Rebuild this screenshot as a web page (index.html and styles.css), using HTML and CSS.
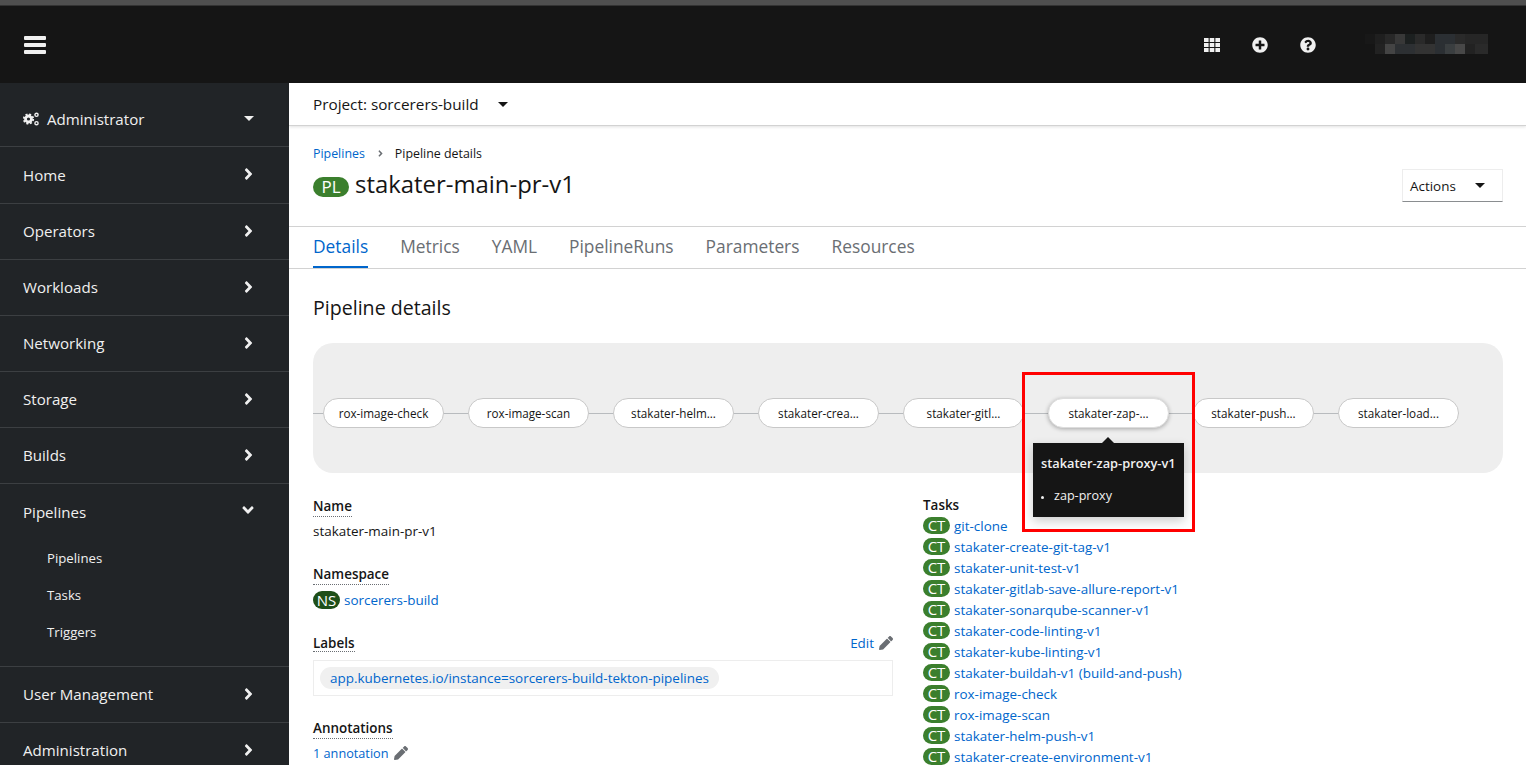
FILE: index.html
```html
<!DOCTYPE html>
<html lang="en">
<head>
    <meta charset="UTF-8">
    <meta name="viewport" content="width=device-width, initial-scale=1.0">
    <title>Pipeline details</title>
    <link rel="stylesheet" href="styles.css">
</head>
<body>
    <div class="top-strip"></div>
    <header class="masthead">
        <div class="burger"><span></span><span></span><span></span></div>
        <div class="masthead-tools">
            <svg class="tool-icon" viewBox="0 0 16 14"><path d="M0 0h4.6v4H0zM5.700 0h4.600v4H5.700zM11.400 0H16v4h-4.600zM0 5h4.600v4H0zM5.700 5h4.600v4H5.700zM11.400 5H16v4h-4.600zM0 10h4.600v4H0zM5.700 10h4.600v4H5.700zM11.400 10H16v4h-4.600z"/></svg>
            <svg class="tool-icon" viewBox="0 0 512 512"><path d="M256 8C119 8 8 119 8 256s111 248 248 248 248-111 248-248S393 8 256 8zm144 276c0 6.6-5.4 12-12 12h-92v92c0 6.6-5.4 12-12 12h-56c-6.600 0-12-5.400-12-12v-92h-92c-6.600 0-12-5.400-12-12v-56c0-6.600 5.400-12 12-12h92v-92c0-6.600 5.400-12 12-12h56c6.600 0 12 5.400 12 12v92h92c6.600 0 12 5.400 12 12v56z"/></svg>
            <svg class="tool-icon" viewBox="0 0 512 512"><path d="M504 256c0 136.997-111.043 248-248 248S8 392.997 8 256C8 119.083 119.043 8 256 8s248 111.083 248 248zM262.655 90c-54.497 0-89.255 22.957-116.549 63.758-3.536 5.286-2.353 12.415 2.715 16.258l34.699 26.31c5.205 3.947 12.621 3.008 16.665-2.122 17.864-22.658 30.113-35.797 57.303-35.797 20.429 0 45.698 13.148 45.698 32.958 0 14.976-12.363 22.667-32.534 33.976C247.128 238.528 216 254.941 216 296v4c0 6.627 5.373 12 12 12h56c6.627 0 12-5.373 12-12v-1.333c0-28.462 83.186-29.647 83.186-106.667 0-58.002-60.165-102-116.531-102zM256 338c-25.365 0-46 20.635-46 46 0 25.364 20.635 46 46 46s46-20.636 46-46c0-25.365-20.635-46-46-46z"/></svg>
            <div class="user-blur"><div class="blur-row-a"></div><div class="blur-row-b"></div></div>
        </div>
    </header>

    <div class="layout">
        <nav class="sidebar">
            <div class="nav-item nav-perspective">
                <span class="nav-label">
                    <svg class="cogs" viewBox="0 0 16 14">
                        <circle cx="5.500" cy="7" r="3" class="cog-ring"/>
                        <circle cx="5.500" cy="7" r="4.700" class="cog-teeth"/>
                        <circle cx="13.500" cy="2.800" r="1.600" class="cog-small"/>
                        <circle cx="13.500" cy="11.200" r="1.600" class="cog-small"/>
                    </svg>
                    Administrator
                </span>
                <span class="caret-down"></span>
            </div>
            <div class="nav-item"><span class="nav-label">Home</span><svg class="chev" viewBox="0 0 256 512"><path d="M224.300 273l-136 136c-9.400 9.400-24.600 9.400-33.900 0l-22.600-22.600c-9.400-9.400-9.400-24.600 0-33.900l96.400-96.400-96.400-96.400c-9.400-9.400-9.400-24.600 0-33.900L54.300 103c9.400-9.400 24.600-9.400 33.900 0l136 136c9.500 9.400 9.500 24.600.1 34z"/></svg></div>
            <div class="nav-item"><span class="nav-label">Operators</span><svg class="chev" viewBox="0 0 256 512"><path d="M224.300 273l-136 136c-9.400 9.400-24.600 9.400-33.900 0l-22.600-22.600c-9.400-9.400-9.400-24.600 0-33.900l96.400-96.400-96.400-96.400c-9.400-9.400-9.400-24.600 0-33.900L54.300 103c9.400-9.400 24.600-9.400 33.900 0l136 136c9.500 9.400 9.500 24.600.1 34z"/></svg></div>
            <div class="nav-item"><span class="nav-label">Workloads</span><svg class="chev" viewBox="0 0 256 512"><path d="M224.300 273l-136 136c-9.400 9.400-24.600 9.400-33.900 0l-22.600-22.600c-9.400-9.400-9.400-24.600 0-33.900l96.400-96.400-96.400-96.400c-9.400-9.400-9.400-24.600 0-33.900L54.300 103c9.400-9.400 24.600-9.400 33.900 0l136 136c9.500 9.400 9.500 24.600.1 34z"/></svg></div>
            <div class="nav-item"><span class="nav-label">Networking</span><svg class="chev" viewBox="0 0 256 512"><path d="M224.300 273l-136 136c-9.400 9.400-24.600 9.400-33.900 0l-22.600-22.600c-9.400-9.400-9.400-24.600 0-33.900l96.400-96.400-96.400-96.400c-9.400-9.400-9.400-24.600 0-33.900L54.300 103c9.400-9.400 24.600-9.400 33.900 0l136 136c9.500 9.400 9.500 24.600.1 34z"/></svg></div>
            <div class="nav-item"><span class="nav-label">Storage</span><svg class="chev" viewBox="0 0 256 512"><path d="M224.300 273l-136 136c-9.400 9.400-24.600 9.400-33.900 0l-22.600-22.600c-9.400-9.400-9.400-24.600 0-33.900l96.400-96.400-96.400-96.400c-9.400-9.400-9.400-24.600 0-33.900L54.300 103c9.400-9.400 24.600-9.400 33.900 0l136 136c9.500 9.400 9.500 24.600.1 34z"/></svg></div>
            <div class="nav-item"><span class="nav-label">Builds</span><svg class="chev" viewBox="0 0 256 512"><path d="M224.300 273l-136 136c-9.400 9.400-24.600 9.400-33.900 0l-22.600-22.600c-9.400-9.400-9.400-24.600 0-33.900l96.400-96.400-96.400-96.400c-9.400-9.400-9.400-24.600 0-33.900L54.300 103c9.400-9.400 24.600-9.400 33.900 0l136 136c9.500 9.400 9.500 24.600.1 34z"/></svg></div>
            <div class="nav-group">
                <div class="nav-item nav-open"><span class="nav-label">Pipelines</span><svg class="chev-down" viewBox="0 0 320 512"><path d="M143 352.300L7 216.300c-9.400-9.400-9.400-24.600 0-33.900l22.600-22.600c9.400-9.400 24.600-9.400 33.900 0l96.400 96.400 96.400-96.400c9.400-9.400 24.600-9.400 33.900 0l22.600 22.600c9.400 9.400 9.400 24.600 0 33.900l-136 136c-9.200 9.400-24.400 9.400-33.800 0z"/></svg></div>
                <a class="nav-sub">Pipelines</a>
                <a class="nav-sub">Tasks</a>
                <a class="nav-sub">Triggers</a>
            </div>
            <div class="nav-item"><span class="nav-label">User Management</span><svg class="chev" viewBox="0 0 256 512"><path d="M224.300 273l-136 136c-9.400 9.400-24.600 9.400-33.900 0l-22.600-22.600c-9.400-9.400-9.400-24.600 0-33.900l96.400-96.400-96.400-96.400c-9.400-9.400-9.400-24.600 0-33.900L54.300 103c9.400-9.400 24.600-9.400 33.900 0l136 136c9.500 9.400 9.500 24.600.1 34z"/></svg></div>
            <div class="nav-item"><span class="nav-label">Administration</span><svg class="chev" viewBox="0 0 256 512"><path d="M224.300 273l-136 136c-9.400 9.400-24.600 9.400-33.900 0l-22.600-22.600c-9.400-9.400-9.400-24.600 0-33.900l96.400-96.400-96.400-96.400c-9.400-9.400-9.400-24.600 0-33.900L54.300 103c9.400-9.400 24.600-9.400 33.900 0l136 136c9.500 9.400 9.500 24.600.1 34z"/></svg></div>
        </nav>

        <main class="content">
            <div class="project-bar">
                <span>Project: sorcerers-build</span>
                <span class="caret-dark"></span>
            </div>

            <div class="page-head">
                <div class="breadcrumb">
                    <a>Pipelines</a>
                    <svg class="crumb-sep" viewBox="0 0 256 512"><path d="M224.300 273l-136 136c-9.400 9.400-24.600 9.400-33.900 0l-22.600-22.600c-9.400-9.400-9.400-24.600 0-33.900l96.400-96.400-96.400-96.400c-9.400-9.400-9.400-24.600 0-33.900L54.300 103c9.400-9.400 24.600-9.400 33.900 0l136 136c9.500 9.400 9.500 24.600.1 34z"/></svg>
                    <span>Pipeline details</span>
                </div>
                <div class="title-row">
                    <h1><span class="badge badge-pl">PL</span>stakater-main-pr-v1</h1>
                    <button class="actions">Actions<span class="caret-dark"></span></button>
                </div>
            </div>

            <div class="tabs">
                <a class="tab tab-active">Details</a>
                <a class="tab">Metrics</a>
                <a class="tab">YAML</a>
                <a class="tab">PipelineRuns</a>
                <a class="tab">Parameters</a>
                <a class="tab">Resources</a>
            </div>

            <section class="details">
                <h2>Pipeline details</h2>

                <div class="graph">
                    <div class="graph-line">
                        <div class="node">rox-image-check</div>
                        <div class="node">rox-image-scan</div>
                        <div class="node">stakater-helm...</div>
                        <div class="node">stakater-crea...</div>
                        <div class="node">stakater-gitl...</div>
                        <div class="node node-hover">stakater-zap-...
                            <div class="tip">
                                <div class="tip-title">stakater-zap-proxy-v1</div>
                                <ul><li>zap-proxy</li></ul>
                            </div>
                            <div class="highlight"></div>
                        </div>
                        <div class="node">stakater-push...</div>
                        <div class="node">stakater-load...</div>
                    </div>
                </div>

                <div class="columns">
                    <div class="col-left">
                        <dl class="field field-name">
                            <dt><span>Name</span></dt>
                            <dd>stakater-main-pr-v1</dd>
                        </dl>
                        <dl class="field field-ns">
                            <dt><span>Namespace</span></dt>
                            <dd><span class="badge badge-ns">NS</span><a>sorcerers-build</a></dd>
                        </dl>
                        <dl class="field field-labels">
                            <dt class="dt-row"><span>Labels</span>
                                <a class="edit">Edit<svg class="pencil" viewBox="0 0 512 512"><path d="M497.900 142.100l-46.100 46.100c-4.700 4.700-12.300 4.700-17 0l-111-111c-4.700-4.700-4.700-12.300 0-17l46.100-46.100c18.700-18.700 49.100-18.700 67.900 0l60.100 60.100c18.800 18.700 18.800 49.100 0 67.900zM284.200 99.800L21.600 362.400.4 483.900c-2.900 16.400 11.400 30.600 27.800 27.800l121.500-21.300 262.600-262.600c4.700-4.700 4.700-12.300 0-17l-111-111c-4.800-4.700-12.400-4.700-17.100 0z"/></svg></a>
                            </dt>
                            <dd class="label-box"><a class="label-chip">app.kubernetes.io/instance=sorcerers-build-tekton-pipelines</a></dd>
                        </dl>
                        <dl class="field field-ann">
                            <dt><span>Annotations</span></dt>
                            <dd><a>1 annotation<svg class="pencil" viewBox="0 0 512 512"><path d="M497.900 142.100l-46.100 46.100c-4.700 4.700-12.300 4.700-17 0l-111-111c-4.700-4.700-4.700-12.300 0-17l46.100-46.100c18.700-18.700 49.100-18.700 67.900 0l60.100 60.100c18.800 18.700 18.800 49.100 0 67.900zM284.200 99.800L21.600 362.400.4 483.900c-2.900 16.400 11.400 30.600 27.800 27.800l121.500-21.300 262.600-262.600c4.700-4.700 4.700-12.300 0-17l-111-111c-4.800-4.700-12.400-4.700-17.100 0z"/></svg></a></dd>
                        </dl>
                    </div>
                    <div class="col-right">
                        <div class="tasks-title">Tasks</div>
                        <ul class="tasks">
                            <li><span class="badge badge-ct">CT</span><a>git-clone</a></li>
                            <li><span class="badge badge-ct">CT</span><a>stakater-create-git-tag-v1</a></li>
                            <li><span class="badge badge-ct">CT</span><a>stakater-unit-test-v1</a></li>
                            <li><span class="badge badge-ct">CT</span><a>stakater-gitlab-save-allure-report-v1</a></li>
                            <li><span class="badge badge-ct">CT</span><a>stakater-sonarqube-scanner-v1</a></li>
                            <li><span class="badge badge-ct">CT</span><a>stakater-code-linting-v1</a></li>
                            <li><span class="badge badge-ct">CT</span><a>stakater-kube-linting-v1</a></li>
                            <li><span class="badge badge-ct">CT</span><a>stakater-buildah-v1 (build-and-push)</a></li>
                            <li><span class="badge badge-ct">CT</span><a>rox-image-check</a></li>
                            <li><span class="badge badge-ct">CT</span><a>rox-image-scan</a></li>
                            <li><span class="badge badge-ct">CT</span><a>stakater-helm-push-v1</a></li>
                            <li><span class="badge badge-ct">CT</span><a>stakater-create-environment-v1</a></li>
                        </ul>
                    </div>
                </div>
            </section>
        </main>
    </div>
</body>
</html>
```

FILE: styles.css
```css
html, body {
    height: 100%;
}

body {
    margin: 0;
    height: 765px;
    overflow: hidden;
    font-family: "Open Sans", "Noto Sans", sans-serif;
    font-size: 13.45px;
    color: #151515;
    background: #fff;
}

a {
    color: #06c;
    text-decoration: none;
}

/* top of the page */
.top-strip {
    height: 6px;
    background: #4f4f4f;
    border-bottom: 1px solid #333;
    box-sizing: border-box;
}

.masthead {
    height: 77px;
    background: #151515;
    display: flex;
    align-items: center;
    justify-content: space-between;
    padding-left: 24px;
}

.burger {
    width: 22px;
    display: flex;
    flex-direction: column;
    gap: 3.400px;
    margin-top: 1px;
}

.burger span {
    height: 4px;
    background: #f0f0f0;
    border-radius: 1px;
}

.masthead-tools {
    display: flex;
    align-items: center;
    margin-right: 38px;
}

.tool-icon {
    width: 16px;
    height: 16px;
    fill: #f0f0f0;
    margin-right: 32px;
}

.user-blur {
    width: 123px;
    height: 20px;
    margin-left: 17px;
    margin-top: -2px;
}

.blur-row-a {
    height: 10px;
    background: linear-gradient(90deg, #181818 0 10px, #1f1f1f 10px 20px, #282828 20px 30px, #383838 30px 40px, #1c2020 40px 50px, #2a2a2a 50px 60px, #1e1e1e 60px 70px, #2b2f33 70px 90px, #2a2a2a 90px 100px, #262626 100px 123px);
}

.blur-row-b {
    height: 10px;
    background: linear-gradient(90deg, #151515 0 10px, #222 10px 20px, #444 20px 30px, #2d3033 30px 50px, #333 50px 70px, #2b2f33 70px 80px, #3a3e40 80px 90px, #484848 90px 100px, #222 100px 110px, #2a2a2a 110px 123px);
}

.layout {
    display: flex;
    height: 682px;
}

/* left nav */
.sidebar {
    width: 289px;
    flex-shrink: 0;
    background: #212427;
    color: #f0f0f0;
    font-size: 15.1px;
}

.nav-item {
    height: 56px;
    box-sizing: border-box;
    border-bottom: 1px solid #3c3f42;
    display: flex;
    align-items: center;
    justify-content: space-between;
    padding: 0 36px 1px 23px;
}

.nav-perspective {
    height: 64px;
    padding: 8px 35px 0 23px;
}

.nav-perspective + .nav-item {
    height: 57px;
}

.nav-label {
    display: flex;
    align-items: center;
}

.cogs {
    width: 16px;
    height: 14px;
    margin-right: 8px;
    fill: none;
    stroke: #f0f0f0;
}

.cog-ring {
    stroke-width: 2.800;
}

.cog-teeth {
    stroke-width: 1.800;
    stroke-dasharray: 2 1.700;
}

.cog-small {
    stroke-width: 1.400;
}

.caret-down {
    width: 0;
    height: 0;
    border-left: 5px solid transparent;
    border-right: 5px solid transparent;
    border-top: 5px solid #f0f0f0;
}

.chev {
    width: 9px;
    height: 18px;
    fill: #f0f0f0;
    margin-top: -1px;
}

.chev-down {
    width: 12px;
    height: 18px;
    fill: #f0f0f0;
    margin: -3px -1px 0 0;
}

.nav-group {
    height: 183px;
    border-bottom: 1px solid #3c3f42;
    box-sizing: border-box;
}

.nav-open {
    border-bottom: none;
    height: 56px;
}

.nav-sub {
    display: block;
    height: 37px;
    line-height: 37px;
    padding-left: 47px;
    color: #f0f0f0;
    font-size: 13.2px;
}

/* main area */
.content {
    flex: 1;
    min-width: 0;
}

.project-bar {
    height: 43px;
    box-sizing: border-box;
    padding: 0 24px;
    display: flex;
    align-items: center;
    gap: 19px;
    font-size: 15.3px;
    border-bottom: 1px solid #d2d2d2;
    box-shadow: 0 1px 3px rgba(3, 3, 3, 0.12);
}

.caret-dark {
    display: inline-block;
    width: 0;
    height: 0;
    border-left: 5px solid transparent;
    border-right: 5px solid transparent;
    border-top: 5px solid #151515;
}

.page-head {
    height: 101px;
    box-sizing: border-box;
    padding: 17px 23px 0 24px;
    border-bottom: 1px solid #d2d2d2;
}

.breadcrumb {
    display: flex;
    align-items: center;
    font-size: 12.4px;
    height: 20px;
}

.crumb-sep {
    width: 5px;
    height: 11px;
    fill: #6a6e73;
    margin: 0 12px 0 13px;
}

.title-row {
    display: flex;
    justify-content: space-between;
    margin-top: 4px;
}

h1 {
    margin: 0;
    font-size: 23.9px;
    font-weight: 400;
    display: flex;
    align-items: center;
    height: 32px;
}

.badge {
    display: inline-block;
    border-radius: 20px;
    color: #fff;
    text-align: center;
}

.badge-pl {
    width: 36px;
    height: 20px;
    line-height: 20px;
    font-size: 17px;
    background: #3b7f2d;
    margin: 8px 6px 0 0;
}

.actions {
    width: 101px;
    height: 33px;
    margin-top: 2px;
    box-sizing: border-box;
    border: 1px solid #ededed;
    border-bottom-color: #8a8d90;
    background: #fff;
    display: flex;
    align-items: center;
    justify-content: space-between;
    padding: 0 17px 0 7px;
    font: inherit;
    color: #151515;
}

.tabs {
    height: 42px;
    box-sizing: border-box;
    display: flex;
    gap: 32px;
    padding-left: 24px;
    border-bottom: 1px solid #d2d2d2;
    font-size: 17.35px;
}

.tab {
    color: #6a6e73;
    line-height: 38px;
    height: 41px;
    box-sizing: border-box;
}

.tab-active {
    color: #06c;
    border-bottom: 2px solid #06c;
}

.details {
    padding: 0 23px 0 24px;
}

h2 {
    margin: 26px 0 0;
    height: 26px;
    line-height: 26px;
    font-size: 19.6px;
    font-weight: 400;
}

/* pipeline graph */
.graph {
    margin-top: 22px;
    height: 130px;
    background: #eee;
    border-radius: 20px;
    padding: 55px 0 0 10px;
    box-sizing: border-box;
}

.graph-line {
    display: flex;
    gap: 24px;
    position: relative;
}

.graph-line::before {
    content: "";
    position: absolute;
    left: -10px;
    right: 44px;
    top: 15px;
    height: 1px;
    background: #b8bbbe;
}

.node {
    width: 121px;
    height: 30px;
    box-sizing: border-box;
    border: 1px solid #c8c8c8;
    border-radius: 15px;
    background: #fff;
    text-align: center;
    line-height: 28px;
    font-size: 11.7px;
    position: relative;
}

.node-hover {
    border-color: #ddd;
    box-shadow: 0 1px 4px rgba(3, 3, 3, 0.3);
}

.tip {
    position: absolute;
    left: -16px;
    top: 44px;
    width: 151px;
    height: 74px;
    box-sizing: border-box;
    background: #151515;
    color: #f0f0f0;
    padding: 12px 8px;
    text-align: left;
    line-height: 16px;
    box-shadow: 0 4px 10px rgba(3, 3, 3, 0.2);
    z-index: 2;
}

.tip::before {
    content: "";
    position: absolute;
    left: 69px;
    top: -6px;
    border-left: 6px solid transparent;
    border-right: 6px solid transparent;
    border-bottom: 6px solid #151515;
}

.tip-title {
    font-size: 12.8px;
    font-weight: 600;
}

.tip ul {
    margin: 17px 0 0;
    padding: 0 0 0 13px;
    font-size: 12.6px;
}

.tip li::marker {
    font-size: 9px;
}

.highlight {
    position: absolute;
    left: -27px;
    top: -27px;
    width: 173px;
    height: 160px;
    box-sizing: border-box;
    border: 3px solid #f00;
    z-index: 3;
}

/* details columns */
.columns {
    display: flex;
    gap: 30px;
}

.col-left {
    width: 580px;
}

.field {
    margin: 0;
}

.field dt {
    font-weight: 600;
    height: 18px;
    line-height: 18px;
}

.field dt span {
    border-bottom: 1px dotted #6a6e73;
    padding-bottom: 1px;
}

.field dd {
    margin: 0;
}

.field-name {
    margin-top: 24px;
}

.field-name dd {
    margin-top: 6px;
    height: 20px;
    line-height: 20px;
}

.field-ns {
    margin-top: 24px;
}

.field-ns dd {
    margin-top: 7px;
    display: flex;
    align-items: center;
    height: 20px;
}

.badge-ns {
    width: 27px;
    height: 18px;
    line-height: 18px;
    font-size: 15px;
    background: #1e4f18;
    margin-right: 4px;
}

.field-labels {
    margin-top: 24px;
}

.dt-row {
    display: flex;
    justify-content: space-between;
    font-weight: 600;
}

.edit {
    font-weight: 400;
    display: flex;
    align-items: center;
}

.pencil {
    width: 14px;
    height: 14px;
    fill: #6a6e73;
    margin-left: 5px;
    vertical-align: -2px;
}

.label-box {
    margin-top: 8px !important;
    height: 36px;
    box-sizing: border-box;
    border: 1px solid #ededed;
    padding: 6px 6px;
    display: flex;
    align-items: center;
}

.label-chip {
    background: #f0f0f0;
    border-radius: 12px;
    height: 22px;
    line-height: 22px;
    padding: 0 10px;
}

.field-ann {
    margin-top: 23px;
}

.field-ann dd {
    margin-top: 6px;
    line-height: 20px;
    font-size: 12.7px;
}

.tasks-title {
    font-weight: 600;
    margin-top: 23px;
    height: 18px;
    line-height: 18px;
}

.tasks {
    list-style: none;
    margin: 1px 0 0;
    padding: 0;
}

.tasks li {
    height: 21px;
    display: flex;
    align-items: center;
}

.badge-ct {
    width: 27px;
    height: 17px;
    line-height: 17px;
    font-size: 15px;
    background: #3b7f2d;
    margin-right: 4px;
}
```
